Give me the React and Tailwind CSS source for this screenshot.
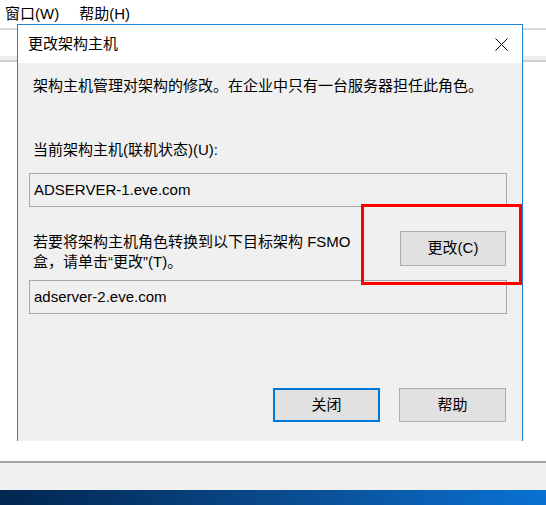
const font = { fontFamily: '"Liberation Sans", "Noto Sans CJK SC", sans-serif' };

const ReadonlyBox = ({ value }) => (
  <div className="mx-[11px] mr-[15px] h-[34px] border border-[#a7a7a7] bg-[#f0f0f0] flex items-center pl-[4px] text-[15px] text-black">
    {value}
  </div>
);

const WinButton = ({ children, primary }) => (
  <div
    className={
      "w-[107px] h-[34px] flex items-center justify-center bg-[#e1e1e1] text-[15px] text-black " +
      (primary ? "border-2 border-[#0078d7]" : "border border-[#adadad]")
    }
  >
    {children}
  </div>
);

export default function App() {
  return (
    <div className="relative w-[546px] h-[505px] overflow-hidden bg-white text-[15px]" style={font}>
      {/* background window */}
      <div className="flex flex-col h-full">
        <div className="h-[28px] flex items-center gap-[20px] pl-[5px] text-[15px] text-black">
          <span>窗口(W)</span>
          <span>帮助(H)</span>
        </div>
        <div className="h-[2px] bg-[#d9d9d9]" />
        <div className="h-[26px] bg-white" />
        <div className="h-[6px] bg-[#ececec] border-b-2 border-[#cfcfcf]" />
        <div className="flex-1 bg-white" />
        <div className="h-[2px] bg-[#a3a3a3]" />
        <div className="h-[27px] bg-[#f0f0f0]" />
        <div className="h-[15px] bg-gradient-to-r from-[#022650] via-[#0a4a8c] to-[#0872d4]" />
      </div>

      {/* dialog */}
      <div className="absolute left-[17px] top-[24px] w-[506px] h-[417px] border-x border-t border-[#1a84d8] flex flex-col">
        <div className="h-[38px] bg-white flex items-center justify-between pl-[10px] pr-[14px] text-black">
          <span className="text-[15px]">更改架构主机</span>
          <svg width="13" height="13" viewBox="0 0 13 13">
            <path d="M0.5 0.5 L12.5 12.5 M12.5 0.5 L0.5 12.5" stroke="#000" strokeWidth="1" fill="none" />
          </svg>
        </div>
        <div className="flex-1 bg-[#f0f0f0] flex flex-col text-black">
          <div className="pl-[15px] pt-[12px] leading-[21px]">
            架构主机管理对架构的修改。在企业中只有一台服务器担任此角色。
          </div>
          <div className="pl-[15px] mt-[43px] leading-[21px]">当前架构主机(联机状态)(U):</div>
          <div className="mt-[13px]">
            <ReadonlyBox value="ADSERVER-1.eve.com" />
          </div>
          <div className="flex items-start justify-between mt-[24px] pl-[15px] pr-[16px]">
            <div className="leading-[20px] pt-px">
              若要将架构主机角色转换到以下目标架构 FSMO
              <br />
              盒，请单击“更改”(T)。
            </div>
            <div className="w-[106px] h-[35px] flex items-center justify-center bg-[#e1e1e1] border border-[#adadad] text-[15px]">
              更改(C)
            </div>
          </div>
          <div className="mt-[8px]">
            <ReadonlyBox value="adserver-2.eve.com" />
          </div>
          <div className="flex justify-end gap-[19px] pr-[16px] mt-[74px]">
            <WinButton primary>关闭</WinButton>
            <WinButton>帮助</WinButton>
          </div>
        </div>
      </div>

      {/* red annotation */}
      <div className="absolute left-[361px] top-[204px] w-[161px] h-[81px] border-[3px] border-[#ff0000]" />
    </div>
  );
}
